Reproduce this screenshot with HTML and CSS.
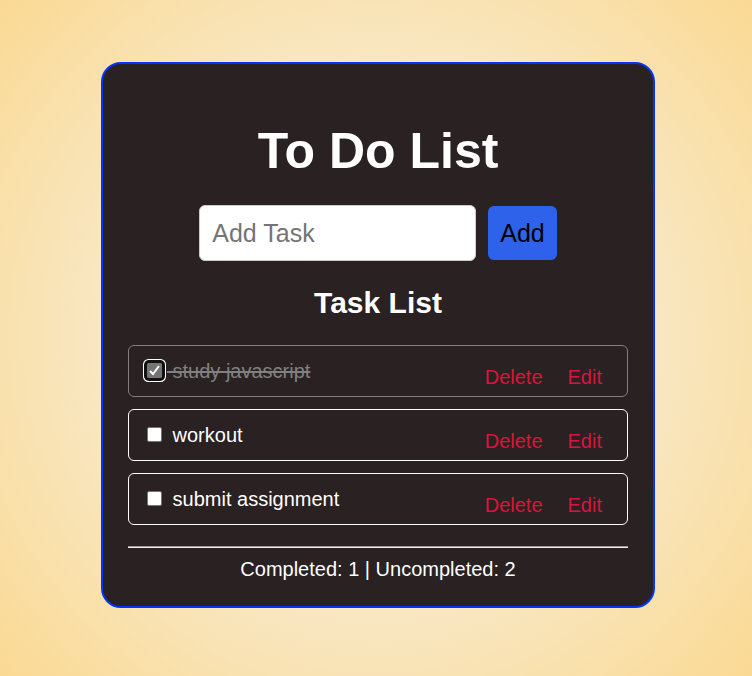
FILE: index.html
```html
<!DOCTYPE html>
<html lang="en">
<head>
<meta charset="utf-8">
<meta name="viewport" content="width=device-width, initial-scale=1">
<title>To Do List</title>
<link rel="stylesheet" href="styles.css">
</head>
<body>
<main class="container">
  <h1>To Do List</h1>
  <form class="add-form">
    <input class="task-input" type="text" placeholder="Add Task" aria-label="Add Task">
    <button class="add-button" type="button">Add</button>
  </form>
  <h2>Task List</h2>
  <ul class="task-list">
    <li class="task completed">
      <label class="task-label"><span class="check-wrap focused"><input class="check" type="checkbox" checked><svg class="tick" viewBox="0 0 15 15" aria-hidden="true"><path d="M3 8l3 3 6-8"/></svg></span> study javascript</label>
      <div class="actions"><button type="button">Delete</button><button type="button">Edit</button></div>
    </li>
    <li class="task">
      <label class="task-label"><span class="check-wrap"><input class="check" type="checkbox"></span> workout</label>
      <div class="actions"><button type="button">Delete</button><button type="button">Edit</button></div>
    </li>
    <li class="task">
      <label class="task-label"><span class="check-wrap"><input class="check" type="checkbox"></span> submit assignment</label>
      <div class="actions"><button type="button">Delete</button><button type="button">Edit</button></div>
    </li>
  </ul>
  <hr>
  <p class="counts">Completed: 1 | Uncompleted: 2</p>
</main>
</body>
</html>
```
FILE: styles.css
```css
* {
  box-sizing: border-box;
}

body {
  margin: 0;
  min-height: 100vh;
  padding: 62px 97px 68px 101px;
  font-family: "Liberation Sans", Arial, sans-serif;
  font-size: 20px;
  line-height: 24px;
  color: #fff;
  background: radial-gradient(circle, #f7f8fc, #fad993);
}

.container {
  padding: 59px 25px 25px;
  background: #292122;
  border: 2px solid #0233ff;
  border-radius: 20px;
}

h1 {
  margin: 0;
  font-size: 50px;
  line-height: 56px;
  text-align: center;
}

.add-form {
  display: flex;
  justify-content: center;
  align-items: center;
  gap: 12px;
  margin-top: 26px;
}

.task-input {
  width: 277px;
  height: 56px;
  padding: 12px;
  font: 25px "Liberation Sans", Arial, sans-serif;
  background: #fff;
  border: 1px solid #ccc;
  border-radius: 6px;
}

.add-button {
  height: 54px;
  padding: 0 12px;
  font: 25px "Liberation Sans", Arial, sans-serif;
  color: #000;
  background: #2f62ea;
  border: 0;
  border-radius: 6px;
}

h2 {
  margin: 24px 0;
  font-size: 30px;
  line-height: 36px;
  text-align: center;
}

.task-list {
  display: grid;
  gap: 12px;
  margin: 0;
  padding: 0;
  list-style: none;
}

.task {
  display: flex;
  justify-content: space-between;
  height: 52px;
  padding: 0 25px 0 18px;
  border: 1px solid #fff;
  border-radius: 6px;
}

.task-label {
  padding-top: 13px;
}

.completed {
  border-color: #808080;
}

.completed .task-label {
  color: #808080;
  text-decoration: line-through;
}

.check-wrap {
  position: relative;
  display: inline-grid;
  width: 15px;
  height: 15px;
  margin-right: 5px;
  border-radius: 2px;
}

.check {
  appearance: none;
  width: 15px;
  height: 15px;
  margin: 0;
  background: #fff;
  border: 1px solid #767676;
  border-radius: 2px;
}

.check:checked {
  background: #757575;
}

.focused {
  box-shadow: 0 0 0 3px #101010, 0 0 0 4px #fff;
}

.tick {
  position: absolute;
  inset: 0;
  fill: none;
  stroke: #fff;
  stroke-width: 2;
}

.actions {
  display: flex;
  gap: 25px;
  padding-top: 12px;
}

.actions button {
  padding: 0;
  font: inherit;
  color: #dc143c;
  background: none;
  border: 0;
}

hr {
  margin: 21px 0 9px;
  border: 0;
  border-top: 1px solid #9a9a9a;
  border-bottom: 1px solid #eee;
}

.counts {
  margin: 0;
  text-align: center;
}
```
